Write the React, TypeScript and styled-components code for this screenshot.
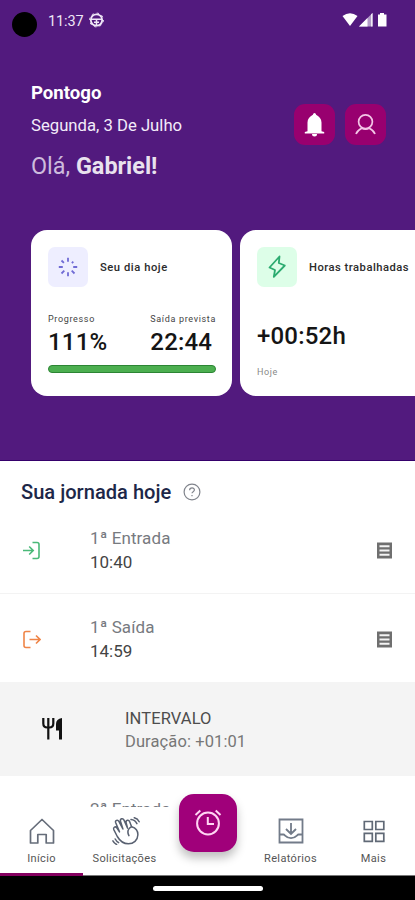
import React from "react";
import styled, { createGlobalStyle } from "styled-components";

const GlobalStyle = createGlobalStyle`
  *, *::before, *::after { box-sizing: border-box; }
  body { margin: 0; background: #fff; font-family: Roboto, "Open Sans", sans-serif; }
  svg { display: block; flex: none; }
`;

const Screen = styled.div`
  width: 415px;
  height: 900px;
  overflow: hidden;
  display: flex;
  flex-direction: column;
  background: #fff;
`;

const Header = styled.header`
  flex: none;
  height: 461px;
  background: #521a7e;
  color: #fff;
  overflow: hidden;
  border-bottom: 1px solid #35006b;
`;

const StatusBar = styled.div`
  display: flex;
  align-items: flex-start;
  height: 42px;
  padding: 12px 27px 0 12px;
`;

const Camera = styled.div`
  width: 25px;
  height: 25px;
  border-radius: 50%;
  background: #000;
`;

const Clock = styled.span`
  margin: -1px 4px 0 11px;
  width: 36px;
  font-size: 14.5px;
  line-height: 21px;
  letter-spacing: -0.1px;
  white-space: nowrap;
  color: #eee6f6;
`;

const StatusIcons = styled.div`
  display: flex;
  gap: 1px;
  margin-left: auto;
`;

const Intro = styled.div`
  display: flex;
  justify-content: space-between;
  height: 188px;
  padding: 39px 29px 0 31px;
`;

const Greeting = styled.div`
  display: flex;
  flex-direction: column;
  white-space: nowrap;
`;

const Company = styled.strong`
  font-size: 18.6px;
  line-height: 24px;
  font-weight: 700;
`;

const Today = styled.span`
  margin-top: 10px;
  font-size: 16.7px;
  line-height: 22px;
  color: #f3ecfa;
`;

const Hello = styled.span`
  margin-top: 14px;
  font-size: 23.4px;
  line-height: 30px;
  color: #cdbbdd;
  b { color: #e9e2ee; }
`;

const Actions = styled.div`
  display: flex;
  gap: 10px;
  padding-top: 23px;
`;

const ActionButton = styled.button`
  display: grid;
  place-items: center;
  width: 41px;
  height: 41px;
  padding: 0;
  border: 0;
  border-radius: 11px;
  background: #98006f;
  color: #fff;
`;

const Cards = styled.div`
  display: flex;
  gap: 8px;
  padding-left: 31px;
`;

const Card = styled.section`
  flex: none;
  width: 201px;
  height: 166px;
  padding: 17px 16px 0 17px;
  border-radius: 16px;
  background: #fff;
  color: #151515;
`;

const CardHead = styled.div`
  display: flex;
  align-items: center;
  gap: 12px;
  height: 40px;
  white-space: nowrap;
`;

const Tile = styled.div<{ $tone: string }>`
  display: grid;
  place-items: center;
  flex: none;
  width: 40px;
  height: 40px;
  border-radius: 7px;
  background: ${(p) => p.$tone};
`;

const CardTitle = styled.h2<{ $spacing: string }>`
  margin: 2px 0 0;
  font-size: 11.2px;
  font-weight: 500;
  line-height: 16px;
  letter-spacing: ${(p) => p.$spacing};
  color: #2b2b2b;
`;

const Metrics = styled.div`
  display: flex;
  justify-content: space-between;
  margin-top: 25px;
`;

const Metric = styled.div`
  display: flex;
  flex-direction: column;
  white-space: nowrap;
`;

const MetricLabel = styled.span`
  font-size: 9px;
  line-height: 14px;
  letter-spacing: 0.66px;
  color: #444;
`;

const Value = styled.span`
  font-size: 24px;
  font-weight: 500;
  line-height: 32px;
  letter-spacing: 0.2px;
`;

const Progress = styled.div`
  height: 8px;
  margin-top: 7px;
  border: 1px solid #2c8534;
  border-radius: 4px;
  background: #4caf50;
`;

const Balance = styled.div`
  display: flex;
  flex-direction: column;
  gap: 14px;
  margin-top: 33px;
`;

const Caption = styled.span`
  font-size: 9px;
  line-height: 12px;
  letter-spacing: 0.6px;
  color: #888;
`;

const Journey = styled.main`
  flex: none;
  height: 346px;
  overflow: hidden;
  background: #fff;
`;

const JourneyTitle = styled.h1`
  display: flex;
  align-items: center;
  gap: 12px;
  height: 44px;
  margin: 0;
  padding: 18px 0 0 21px;
  font-size: 20.1px;
  font-weight: 500;
  line-height: 26px;
  white-space: nowrap;
  color: #1d2748;
`;

const Entry = styled.div<{ $divided?: boolean }>`
  display: flex;
  align-items: center;
  height: ${(p) => (p.$divided ? "89px" : "88px")};
  padding: ${(p) => (p.$divided ? "3px" : "4px")} 22px 0;
  border-bottom: 1px solid ${(p) => (p.$divided ? "#f3f3f3" : "transparent")};
`;

const EntryText = styled.div`
  display: flex;
  flex-direction: column;
  flex: 1;
  min-height: 47px;
  margin-left: 49px;
  font-size: 17px;
  line-height: 23.5px;
  color: #444;
`;

const EntryLabel = styled.span`
  color: #777a7f;
  letter-spacing: 0.1px;
`;

const Break = styled.div`
  display: flex;
  align-items: center;
  height: 94px;
  padding: 0 42px;
  background: #f4f4f4;
`;

const BreakText = styled.div`
  display: flex;
  flex-direction: column;
  margin-left: 62px;
  padding-top: 2px;
  font-size: 16.5px;
  line-height: 23px;
  letter-spacing: 0.1px;
  color: #4d4d4d;
  span + span { color: #777; }
`;

const TabBar = styled.nav`
  flex: none;
  display: grid;
  grid-template-columns: repeat(5, 83px);
  height: 69px;
  background: #fff;
  border-bottom: 1px solid #777;
  z-index: 1;
`;

const Tab = styled.div<{ $active?: boolean }>`
  display: flex;
  flex-direction: column;
  align-items: center;
  gap: 5px;
  height: 69px;
  padding-top: 10px;
  font-size: 11px;
  letter-spacing: 0.35px;
  line-height: 17px;
  color: #555;
  border-bottom: 3px solid ${(p) => (p.$active ? "#84005f" : "transparent")};
  white-space: nowrap;
`;

const PunchButton = styled.button`
  display: grid;
  place-items: center;
  width: 58px;
  height: 58px;
  margin: -13px 0 0 13px;
  padding: 0 0 2px;
  border: 0;
  border-radius: 15px;
  background: #a0007a;
  box-shadow: 0 6px 10px rgba(0, 0, 0, 0.25);
`;

const SystemBar = styled.footer`
  flex: none;
  display: flex;
  justify-content: center;
  height: 24px;
  padding-top: 10px;
  background: #000;
`;

const Handle = styled.div`
  width: 110px;
  height: 5px;
  border-radius: 3px;
  background: #fff;
`;

const WheelIcon = () => (
  <svg width="16" height="16" viewBox="0 0 16 16" fill="none" stroke="#efe7f7">
    <circle cx="8.500" cy="8" r="5.700" strokeWidth="1.8" />
    <path d="M3 7.200h11M8.500 7.500V13.500M6 10.300h5" strokeWidth="1.5" />
    <circle cx="8.500" cy="8" r="6.900" strokeWidth="1" strokeDasharray="2.200 3.220" />
  </svg>
);

const SignalIcons = () => (
  <svg width="46" height="16" viewBox="0 0 46 16" fill="#fff">
    <path d="M.5 4Q8 -1.300 15.500 4L8 14Z" />
    <path d="M30.500 1v13.500H17Z" fill="#b39bc9" />
    <path d="M25.500 6v8.500H17Z" />
    <path d="M30.500 1v13.500h-1.300V2.200Z" />
    <path d="M38 1h4v1.500h2.500v12H36V2.500h2Z" />
  </svg>
);

const BellIcon = () => (
  <svg width="21" height="25" viewBox="0 0 21 25" fill="#fff">
    <path d="M10.500 1c.8 0 1.300.8 1.600 1.700 3.200 1.900 5.400 4 5.400 7.700v8.800l2.700.9v1.500H.8v-1.500l2.700-.9v-8.800C3.500 6.700 5.700 4.600 8.900 2.700 9.200 1.800 9.700 1 10.500 1Z" />
    <path d="M8 22h5a2.500 2.500 0 0 1-5 0Z" />
  </svg>
);

const PersonIcon = () => (
  <svg width="22" height="22" viewBox="0 0 22 22" fill="none" stroke="#f3c6e6" strokeWidth="1.7">
    <circle cx="10.500" cy="7.800" r="6.900" />
    <path d="M1 20c1-2.600 3-4.300 5.700-5.700 2.500 1.100 5.100 1.100 7.600 0 2.700 1.400 4.700 3.100 5.700 5.700" />
  </svg>
);

const SpinnerIcon = () => (
  <svg width="20" height="20" viewBox="0 0 20 20" stroke="#706bd5" strokeWidth="1.8">
    <path d="M10 .8v4M10 15.200v4M.8 10h4M15.200 10h4M3.500 3.500l2.400 2.400M13.700 13.700l2.800 2.800M3.500 16.500l2.800-2.800M13.900 6.100l1.400-1.400" />
  </svg>
);

const BoltIcon = () => (
  <svg width="20" height="24" viewBox="0 0 20 24" fill="none" stroke="#2cab70" strokeWidth="1.8" strokeLinejoin="round">
    <path d="M12.500 1.500 2.500 12.500l5.500 2.500L6.800 21.800 17.800 10.500l-6-2.500Z" />
  </svg>
);

const HelpIcon = () => (
  <svg width="18" height="18" viewBox="0 0 18 18" fill="none" stroke="#80848c" strokeWidth="1.2">
    <circle cx="9" cy="9" r="7.900" />
    <path d="M6.600 7.200c.1-3.100 5-2.900 4.800-.2-.1 1.700-2.300 1.600-2.400 3.300" />
    <path d="M9 12v1.300" />
  </svg>
);

const EnterIcon = () => (
  <svg width="19" height="19" viewBox="0 0 19 19" fill="none" stroke="#4ab978" strokeWidth="1.6">
    <path d="M10.500 1.500H15q2 0 2 2v12q0 2-2 2h-4.500" />
    <path d="M1 9.500h10M7.200 5.500l4 4-4 4" />
  </svg>
);

const ExitIcon = () => (
  <svg width="19" height="19" viewBox="0 0 19 19" fill="none" stroke="#ef8548" strokeWidth="1.6">
    <path d="M8.500 1.500H4q-2 0-2 2v12q0 2 2 2h4.500" />
    <path d="M7.500 9.500h10.500M14 5.500l4 4-4 4" />
  </svg>
);

const ReceiptIcon = () => (
  <svg width="17" height="17" viewBox="0 0 17 17">
    <path d="M1 .5h15v16H1Z" fill="#6f6f6f" />
    <path d="M3.500 4.200h10M3.500 8.500h10M3.500 12.800h10" stroke="#f4f4f4" strokeWidth="2" />
  </svg>
);

const CutleryIcon = () => (
  <svg width="21" height="22" viewBox="0 0 21 22" fill="none" stroke="#111">
    <path d="M1.300 0v5.500q0 4 4 4h2q4 0 4-4V0M6.300 0v21.500" strokeWidth="2.200" />
    <path d="M20 0v21.500h-3v-9h-3V6q0-5 6-6Z" fill="#111" stroke="none" />
  </svg>
);

const HomeIcon = () => (
  <svg width="28" height="28" viewBox="0 0 28 28" fill="none" stroke="#666d7a" strokeWidth="1.7" strokeLinejoin="round">
    <path d="M2.500 26V13.500L14 2.500l11.500 11V26h-7.300v-8.500H9.800V26Z" />
  </svg>
);

const WaveIcon = () => (
  <svg width="30" height="28" viewBox="-1 1 30 28" fill="none" stroke="#596171" strokeWidth="1.5" strokeLinecap="round" strokeLinejoin="round">
    <path d="M6.300 20.500 2.800 13.600c-1-2.300 1.700-3.700 3-1.700l2.700 4L4.700 6.800C3.800 4.400 6.700 3.200 7.900 5.400l4 7.600-2.400-7.700C8.800 2.700 11.900 1.700 13 4.100l3.600 8-1.500-5.500c-.5-2.600 2.700-3.200 3.600-.8l1.900 4.900c3.800 1.100 6.400 4 6.300 8.100-.2 5.500-4.300 9-9.500 9-5 0-8.500-2.800-11.100-7.300Z" />
    <path d="M20.600 10.700c-3.400 1.900-4.600 5.200-2.700 9M20 3.600c2.900.3 4.700 1.600 5.900 4M23.300 1.700c2.300.6 3.900 1.900 4.900 4M4.200 23c.9 1.700 1.900 2.800 3.400 3.700M1.900 24.800c.9 1.700 2.100 2.900 3.700 3.700" />
  </svg>
);

const AlarmIcon = () => (
  <svg width="28" height="27" viewBox="0 0 28 27" fill="none" stroke="#ffd5f3" strokeWidth="2">
    <circle cx="14" cy="14.500" r="10.900" />
    <path d="M13.800 8v7h6.200M1.500 6l4.800-4.500M26.500 6l-4.800-4.500" />
  </svg>
);

const ReportIcon = () => (
  <svg width="28" height="28" viewBox="0 0 28 28" fill="none" stroke="#727b89" strokeWidth="1.8">
    <path d="M2.500 2.500h23v23h-23ZM14 6v11M9 12l5 5 5-5M2.500 17.500h4c1.500 0 2.500 3.700 7.500 3.700s6-3.700 7.500-3.700h4" />
  </svg>
);

const GridIcon = () => (
  <svg width="28" height="28" viewBox="0 0 28 28" fill="none" stroke="#606976" strokeWidth="1.7">
    <path d="M4.300 4.500h8v8h-8ZM15.800 4.500h8v8h-8ZM4.300 16.300h8v8h-8ZM15.800 16.300h8v8h-8Z" />
  </svg>
);

type PunchProps = { icon: React.ReactNode; label: string; time?: string; divided?: boolean };

const Punch = ({ icon, label, time, divided }: PunchProps) => (
  <Entry $divided={divided}>
    {icon}
    <EntryText>
      <EntryLabel>{label}</EntryLabel>
      {time && <span>{time}</span>}
    </EntryText>
    <ReceiptIcon />
  </Entry>
);

export default function App() {
  return (
    <>
      <GlobalStyle />
      <Screen>
        <Header>
          <StatusBar>
            <Camera />
            <Clock>11:37</Clock>
            <WheelIcon />
            <StatusIcons><SignalIcons /></StatusIcons>
          </StatusBar>
          <Intro>
            <Greeting>
              <Company>Pontogo</Company>
              <Today>Segunda, 3 De Julho</Today>
              <Hello>Olá, <b>Gabriel!</b></Hello>
            </Greeting>
            <Actions>
              <ActionButton aria-label="Notificações"><BellIcon /></ActionButton>
              <ActionButton aria-label="Perfil"><PersonIcon /></ActionButton>
            </Actions>
          </Intro>
          <Cards>
            <Card>
              <CardHead>
                <Tile $tone="#eeeeff"><SpinnerIcon /></Tile>
                <CardTitle $spacing="0.55px">Seu dia hoje</CardTitle>
              </CardHead>
              <Metrics>
                <Metric>
                  <MetricLabel>Progresso</MetricLabel>
                  <Value>111%</Value>
                </Metric>
                <Metric>
                  <MetricLabel>Saída prevista</MetricLabel>
                  <Value>22:44</Value>
                </Metric>
              </Metrics>
              <Progress />
            </Card>
            <Card>
              <CardHead>
                <Tile $tone="#ddfee8"><BoltIcon /></Tile>
                <CardTitle $spacing="0.5px">Horas trabalhadas</CardTitle>
              </CardHead>
              <Balance>
                <Value>+00:52h</Value>
                <Caption>Hoje</Caption>
              </Balance>
            </Card>
          </Cards>
        </Header>
        <Journey>
          <JourneyTitle>Sua jornada hoje <HelpIcon /></JourneyTitle>
          <Punch icon={<EnterIcon />} label="1ª Entrada" time="10:40" divided />
          <Punch icon={<ExitIcon />} label="1ª Saída" time="14:59" />
          <Break>
            <CutleryIcon />
            <BreakText>
              <span>INTERVALO</span>
              <span>Duração: +01:01</span>
            </BreakText>
          </Break>
          <Punch icon={<EnterIcon />} label="2ª Entrada" />
        </Journey>
        <TabBar>
          <Tab $active><HomeIcon />Início</Tab>
          <Tab><WaveIcon />Solicitações</Tab>
          <PunchButton aria-label="Registrar ponto"><AlarmIcon /></PunchButton>
          <Tab><ReportIcon />Relatórios</Tab>
          <Tab><GridIcon />Mais</Tab>
        </TabBar>
        <SystemBar><Handle /></SystemBar>
      </Screen>
    </>
  );
}
